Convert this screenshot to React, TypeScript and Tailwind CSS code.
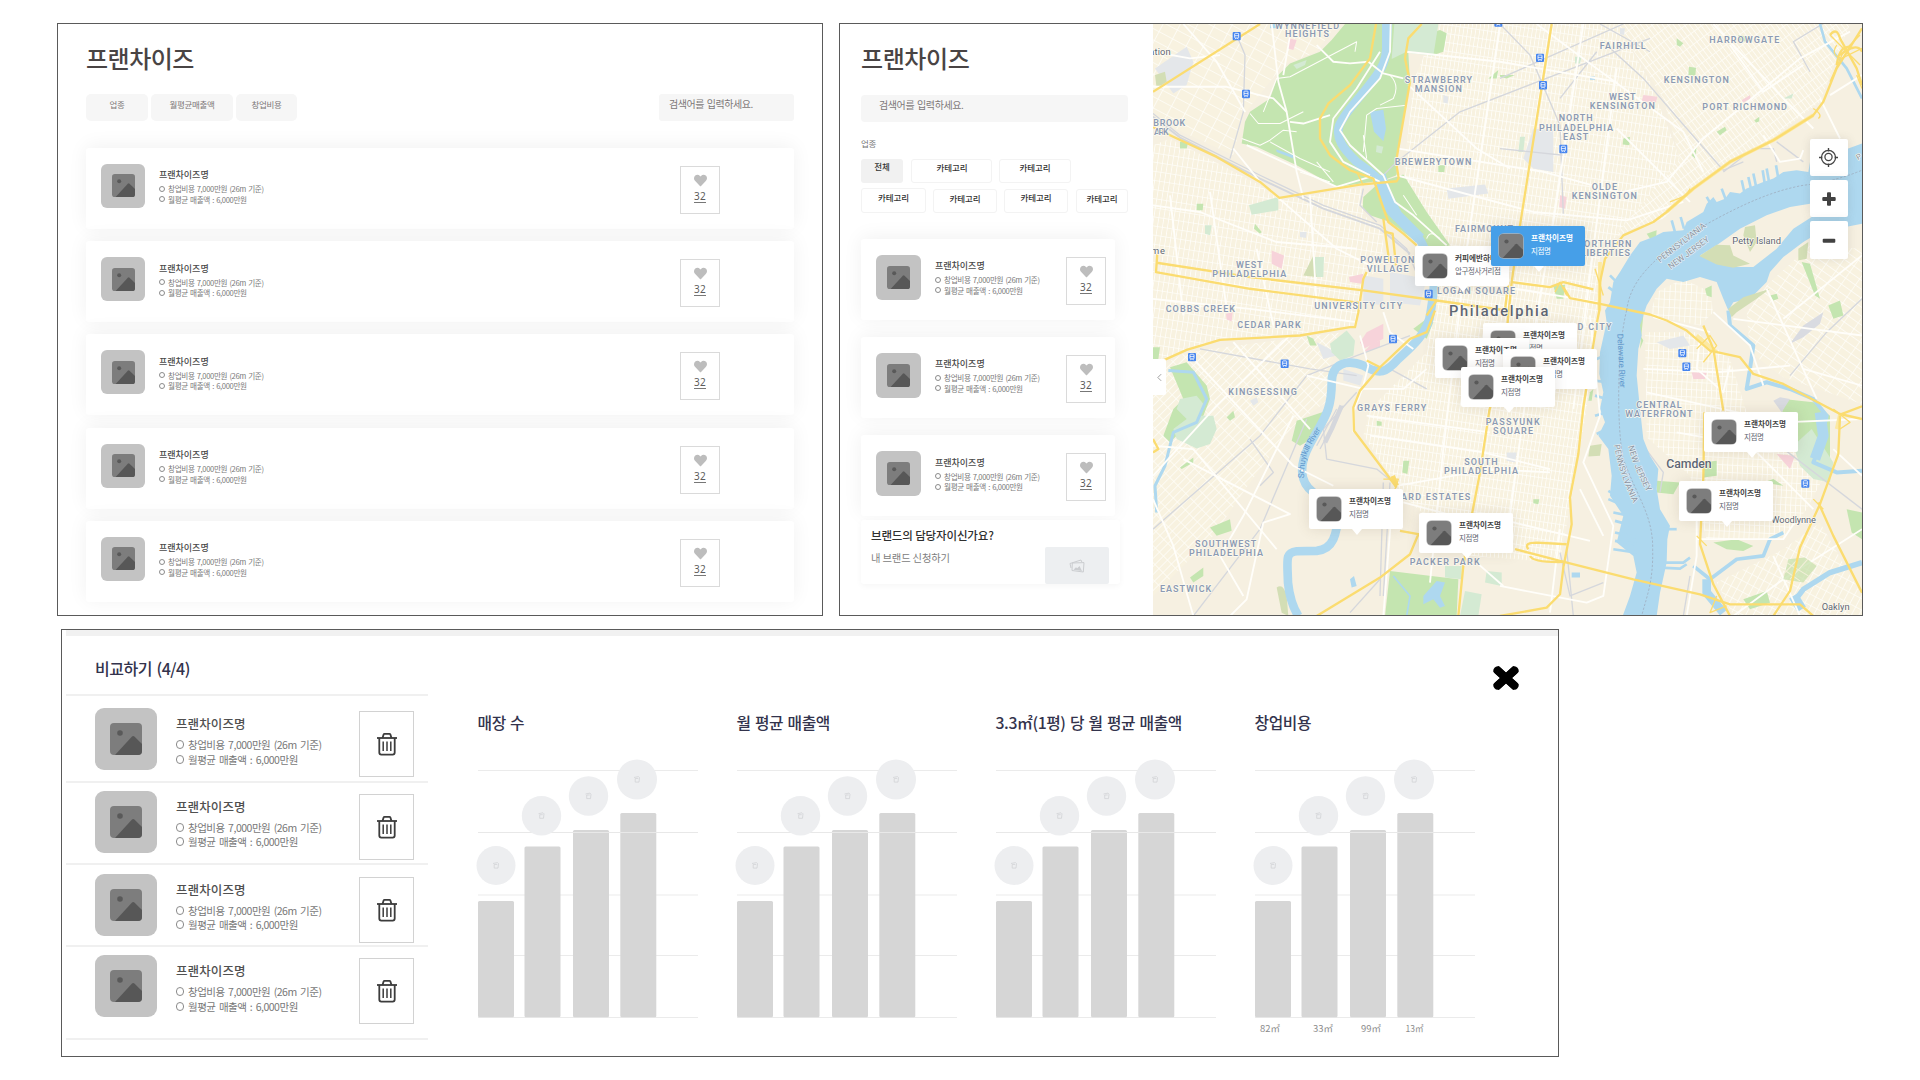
import React from "react";
import { FaHeart } from "react-icons/fa";

/* ---------- shared pieces ---------- */

function Thumb({ className, inner }: { className: string; inner: string }) {
  return (
    <div className={`flex shrink-0 items-center justify-center bg-[#c3c3c3] ${className}`}>
      <Photo className={inner} />
    </div>
  );
}

function Photo({ className }: { className: string }) {
  return (
    <svg viewBox="0 0 32 32" className={className}>
      <rect width="32" height="32" rx="4" fill="#7d7d7d" />
      <circle cx="10" cy="10" r="2.8" fill="#595959" />
      <path d="M5 32 L22 13.5 Q23.2 12.4 24.4 13.5 L32 21 V28 Q32 32 28 32 Z" fill="#575757" />
    </svg>
  );
}

function Ring({ className }: { className: string }) {
  return <span className={`inline-block shrink-0 rounded-full border-[#8b8b8b] ${className}`} />;
}

function LikeBox({ className }: { className: string }) {
  return (
    <div className={`flex shrink-0 flex-col items-center border border-[#dadada] bg-white ${className}`}>
      <FaHeart className="mt-[7px] h-[13px] w-[13px] text-[#bdbdbd]" />
      <span className="mt-[4px] border-b border-[#777] pb-px font-['Noto_Sans',sans-serif] text-[10px] leading-[10px] tracking-[0.4px] text-[#5c5c5c]">
        32
      </span>
    </div>
  );
}

function CardInfo() {
  return (
    <div className="ml-[14px] flex flex-col">
      <div className="mt-[6.5px] text-[9px] font-medium leading-[9px] text-[#4a4a4a]">프랜차이즈명</div>
      <div className="mt-[5px] flex items-center text-[7.6px] leading-[9px] tracking-[-0.36px] text-[#7a7a7a] [word-spacing:0.9px]">
        <Ring className="mr-[3px] h-[6px] w-[6px] border" />
        창업비용 7,000만원 (26m 기준)
      </div>
      <div className="mt-[1.5px] flex items-center text-[7.6px] leading-[9px] tracking-[-0.36px] text-[#7a7a7a] [word-spacing:0.9px]">
        <Ring className="mr-[3px] h-[6px] w-[6px] border" />
        월평균 매출액 : 6,000만원
      </div>
    </div>
  );
}

/* ---------- list panel ---------- */

function ListPanel() {
  return (
    <section className="h-[593px] w-[766px] overflow-hidden border border-[#5a5a5a] bg-white pl-[28px] pt-[21px]">
      <h1 className="text-[24px] font-medium leading-[26px] text-[#494444] tracking-[-0.5px]">프랜차이즈</h1>
      <div className="mt-[23px] flex h-[27px] w-[708px] text-[8.5px] leading-[20px] text-[#7d7878] tracking-[-0.3px]">
        <div className="w-[62px] rounded-[5px] bg-[#f6f6f6] text-center">업종</div>
        <div className="ml-[3px] w-[82px] rounded-[5px] bg-[#f6f6f6] text-center">월평균매출액</div>
        <div className="ml-[3px] w-[61px] rounded-[5px] bg-[#f6f6f6] text-center">창업비용</div>
        <div className="ml-auto w-[135px] rounded-[3px] bg-[#f6f6f6] pl-[10px] text-[10px] leading-[19px] tracking-[-0.45px] [word-spacing:1px]">
          검색어를 입력하세요.
        </div>
      </div>
      <div className="mt-[26.8px] flex w-[708px] flex-col gap-[12.3px]">
        {[0, 1, 2, 3, 4].map((i) => (
          <div key={i} className="flex h-[81px] rounded-[3px] bg-white pl-[15px] pt-[16px] shadow-[0_-2px_20px_rgba(0,0,0,0.06)]">
            <Thumb className="h-[44px] w-[44px] rounded-[6px]" inner="h-[23px] w-[23px]" />
            <CardInfo />
            <LikeBox className="ml-auto mr-[74px] mt-[2px] h-[48px] w-[40px]" />
          </div>
        ))}
      </div>
    </section>
  );
}

/* ---------- map ---------- */

const GRIDS = [
  { id: "ga", a: 28, w: 46, h: 30, pts: "9,27 560,27 500,110 400,150 280,300 250,420 9,310" },
  { id: "gb", a: 9, w: 15, h: 27, pts: "9,390 60,370 330,510 390,555 640,515 640,600 700,640 700,760 640,790 620,935 450,955 210,970 9,1040" },
  { id: "gc", a: 8.5, w: 12, h: 26, pts: "860,27 1400,27 1500,200 1590,430 1550,590 1350,690 1345,890 1310,1180 1290,1300 1230,1640 960,1620 760,1440 640,1260 660,1180 830,1010 860,800 890,680 760,490 790,200" },
  { id: "gd", a: -37, w: 13, h: 30, pts: "1400,27 2100,27 2010,260 1860,375 1740,440 1630,520 1540,610 1400,655 1590,430 1540,250" },
  { id: "ge", a: 45, w: 17, h: 36, pts: "9,1060 110,1010 450,965 580,950 540,1050 540,1150 430,1230 300,1400 190,1560 9,1740" },
  { id: "gf", a: 3, w: 15, h: 22, pts: "1485,950 1640,950 1740,1030 1790,1190 1940,1200 2050,1330 1970,1480 1900,1570 1670,1570 1620,1380 1490,1265" },
  { id: "gg", a: -55, w: 22, h: 36, pts: "1790,890 1850,810 1980,690 2136,700 2136,1165 1900,1085 1800,1010" },
  { id: "gh", a: 28, w: 20, h: 30, pts: "1900,1600 2010,1520 2136,1740 2136,1800 1750,1800 1700,1700" },
  { id: "gi", a: 3, w: 16, h: 24, pts: "1520,830 1600,790 1680,830 1690,890 1650,930 1500,900" },
];

const WHITE = [
  "M9 215 L230 215 370 250 410 290", "M100 27 L200 140 285 290", "M365 27 L385 200 410 290 440 470 460 550", "M400 180 L420 60",
  "M9 110 L120 130 210 120", "M250 400 L330 500 560 700 700 770", "M500 90 L550 140 600 145 655 140 700 175 760 190",
  "M290 390 L560 515 660 485 690 500", "M420 320 L460 325 540 300", "M722 27 L720 110 690 190 600 290 570 345 600 390 700 480 735 560 790 600 890 690",
  "M690 110 L620 220 550 310 540 380 580 440 660 480", "M770 110 L1050 140 1400 200", "M775 210 L980 400 1080 460", "M745 400 L1180 470 1400 530",
  "M740 480 L1150 590 1430 615 1600 560", "M9 570 L150 590 380 680 620 700", "M9 850 L300 880 620 920", "M320 700 L370 930", "M180 530 L230 880",
  "M60 540 L100 900", "M480 540 L500 870", "M860 780 L1340 860", "M1050 27 L950 700 880 1300 840 1700", "M1300 27 L1210 620 1160 900 1080 1500",
  "M1400 160 L1330 700 1270 1180", "M1160 27 L1340 160 1600 350 1660 470", "M1420 530 L1550 500 1660 370 1950 130 2100 50",
  "M1690 27 L1900 250 1990 340", "M1740 90 L1840 230 1960 150", "M2010 250 L2070 370", "M1840 360 L1890 440 1950 430 1960 405",
  "M2040 240 L2136 180", "M1400 340 L1620 560", "M1320 900 L1350 1200 1300 1340 1390 1530 1360 1740 1310 1760 1050 1710",
  "M1050 1510 L1320 1575", "M1230 1540 L1200 1790", "M1290 1420 L1360 1560", "M100 1330 L420 1495 340 1520 290 1750 240 1800",
  "M9 1290 L130 1300 380 1600", "M9 1450 L70 1590 130 1800", "M130 1030 L430 1350 550 1410", "M250 980 L480 1240", "M430 1200 L280 1500 210 1620 280 1740",
  "M9 1380 L200 1170 420 960", "M470 1080 L640 1120 760 1120 830 1060", "M630 960 L655 1050 640 1110 610 1190 610 1250", "M700 890 L720 950 790 1000",
  "M650 1200 L1020 1250", "M660 1260 L1000 1310 1200 1360", "M740 1410 L1020 1360 1200 1370", "M730 1420 L700 1800", "M760 1460 L950 1510 1050 1520",
  "M980 1640 L1060 1710", "M1480 1060 L1700 1070 1920 1050", "M1650 960 L1640 1060 1720 1130 1740 1050", "M1490 1130 L1900 1220 2136 1210",
  "M1580 1250 L1800 1290 1990 1480", "M1640 1480 L1640 1620 1610 1800", "M1640 1570 L1900 1570 1940 1510", "M1870 1620 L1950 1800",
  "M1750 1800 L1900 1690 2136 1540", "M1750 910 L2136 960", "M1690 890 L1800 990 1840 1110", "M1850 820 L2000 1150", "M2136 1110 L1960 1060",
  "M2050 1300 L2136 1380", "M1510 905 L1680 950", "M1900 910 L2136 720",
];

const GREY_RAIL = [
  "M9 295 L90 360 330 480 520 570 690 630 770 700 810 800", "M260 60 L285 120 280 290 240 430", "M640 520 L630 570 680 620", "M1340 110 L1230 250",
  "M1500 70 L930 290 740 440 690 490", "M1050 27 L1140 120 1230 330 1240 600", "M1050 190 L1420 27", "M1370 90 L1480 190 1610 340 1720 465 1780 440",
  "M1500 110 L1350 27", "M2060 1 L1930 80 1980 170",
  "M9 1540 L330 1260 470 1080 620 1020 780 960", "M130 1800 L330 1540 470 1210", "M300 1270 L370 1370 330 1410", "M620 1130 L520 1240 530 1330 680 1360 730 1400",
  "M560 1180 L500 1290", "M580 1170 L510 1300", "M150 1000 L480 1060 620 1080", "M700 1400 L690 1740", "M720 1400 L700 1740", "M1920 1080 L2030 950 2136 850",
  "M1230 1610 L1260 1740 1360 1700", "M1250 1600 L1270 1800", "M1480 1290 L1540 1370 1530 1430", "M1810 1230 L2136 1480", "M600 1790 L690 1690", "M1600 1800 L1620 1680",
  "M1720 470 L1810 400 1870 400 1880 440", "M720 1060 L830 1120", "M1050 400 L1240 420", "M1880 380 L1960 440",
];

const YELLOW = [
  "M9 230 L330 27",
  "M9 335 L60 360 200 425 330 500 388 548 630 508 740 498 746 488 738 440 780 200 765 130 775 70 815 27",
  "M678 27 L660 130 600 210 535 265 510 310 510 370 540 420 600 465 670 490 690 550 715 620 760 655 800 690",
  "M22 715 L18 770 300 820 630 862 M20 742 L300 785 640 825 860 855 1070 885",
  "M700 610 L718 740 M708 650 L728 655 738 750",
  "M650 770 L640 790 625 890 615 935 600 935 450 960 210 973 110 1003 50 1030 9 1048",
  "M1205 27 L1110 630 1085 800 1065 1000 1018 1185 990 1370 965 1500 940 1650 925 1800",
  "M2136 40 L2060 160 2020 260 1990 300 1870 375 1740 440 1630 520 1550 590 1510 620 1420 660 1365 730 1350 800 1348 885 1340 925 1300 1175 1285 1315 1260 1445 1265 1525 1240 1655 1230 1735 1190 1775 1050 1800",
  "M1085 800 L1200 815 1240 800 1330 822 M1240 815 L1260 848 1350 865 1500 897 1550 915 1610 945 1680 1005 1770 1025 1810 1075 1900 1105 2070 1195 2136 1210 M2136 1172 L2070 1197",
  "M2070 1200 L2065 1315 2010 1465 1950 1595 1920 1725 1870 1800 M2005 1460 L2050 1560 2136 1730",
  "M1660 930 L1690 1000 1720 1185 M1663 1190 L1660 1385 1650 1585 1690 1705 1740 1800",
  "M1095 1600 L1230 1635 1450 1690 1650 1735 1740 1765 1950 1765 1990 1800",
  "M855 885 L830 950 780 970 690 1055 630 1125 610 1175 612 1245 680 1335 740 1415 M650 1035 L690 1055",
  "M750 1545 L805 1555 780 1615 690 1685 500 1800",
  "M860 855 L830 900 M1135 1600 Q1120 1580 1160 1580 L1250 1585 M1140 1620 Q1150 1640 1240 1638",
  "M2040 60 Q2060 35 2070 70 L2120 160 2136 210 M2070 120 Q2120 80 2136 110 M2060 150 Q2070 80 2110 100",
  "M9 1270 L25 1300 9 1310", "M1075 800 L1065 885",
];

const GREENS = [
  "585,27 690,27 770,27 780,200 745,400 740,480 700,495 560,515 440,450 320,395 275,385 285,320 300,290 360,250 385,180 420,145 510,110 545,75",
  "640,545 690,500 760,478 830,590 900,690 860,700 800,680 720,620 660,600 638,575",
  "720,1665 925,1690 920,1800 705,1800", "440,1215 530,1185 500,1260 450,1290 425,1275",
  "60,1055 110,1040 170,1110 180,1150 160,1200 110,1230 60,1280 40,1260 70,1180 100,1150", "820,60 870,45 890,55 880,110 850,120",
  "1480,975 1430,885 1480,900 1470,1000", "1900,1150 1990,1160 2040,1200 2040,1330 1990,1380 1950,1300 1890,1280",
  "1690,1580 1760,1570 1810,1590 1780,1605 1730,1600", "1840,1400 1870,1390 1900,1410", "2090,1480 2136,1490 2136,1570 2105,1550",
  "1660,1340 1700,1335 1700,1380 1660,1385", "1520,1395 1590,1400 1570,1435 1520,1430", "790,940 830,910 850,920 830,970", "470,960 490,970 500,990 480,990",
  "90,380 115,380 110,400 90,400", "120,1685 160,1655 160,1680 130,1700", "180,1535 240,1510 245,1545 200,1560", "230,1205 250,1185 255,1205 240,1215",
  "90,1355 130,1325 130,1340 95,1360", "760,1335 778,1335 772,1375 757,1370", "9,995 30,995 25,1030 9,1030", "865,450 885,450 883,470 865,470",
  "1420,370 1440,365 1438,390 1418,388", "1580,70 1600,85 1590,95 1580,90", "1617,155 1638,158 1636,182 1615,180", "1625,420 1640,395 1635,430",
  "1700,350 1725,335 1730,345 1710,360", "1813,315 1828,305 1828,318 1818,323", "1765,60 1790,65 1790,80 1765,75", "1050,180 1095,180 1070,190 1050,185",
  "1015,190 1045,165 1040,190", "1490,655 1520,645 1518,670 1500,670", "1665,820 1685,810 1685,845 1670,840", "1955,740 1980,745 2010,850 1995,840",
  "2035,870 2070,855 2080,900 2050,910", "1210,810 1245,808 1240,850 1220,850", "140,565 160,565 158,585 140,585", "315,625 335,650 330,655 312,640",
  "1860,840 1880,835 1885,850 1870,855", "1320,1130 1330,1120 1325,1155 1315,1155", "680,1215 695,1218 695,1230 680,1230", "1150,1450 1168,1450 1165,1465 1150,1462",
  "1780,1750 1850,1725 1860,1760 1800,1780",
];

const MINTS = [
  "733,27 865,27 850,122 765,112 725,132", "297,570 385,545 385,585 305,598", "90,1150 140,1140 165,1170 150,1200 190,1200 200,1240 180,1285 140,1298 80,1270 70,1240 110,1210 80,1180",
  "540,985 590,945 615,975 610,1020 570,1035 545,1010", "945,1725 995,1735 985,1800 930,1800", "1010,1665 1055,1670 1055,1710 1005,1700", "885,1650 935,1650 935,1690 885,1685",
  "495,725 522,725 520,785 495,785", "1930,1290 1985,1240 2050,1340 2040,1400 1990,1390 1950,1350", "430,150 470,135 465,150 440,162", "165,630 185,630 180,660 165,655",
  "1110,365 1125,365 1120,410 1105,410", "1275,125 1295,125 1290,145 1275,145", "1900,250 1930,235 1925,250", "680,390 700,395 695,415 678,410",
];

const GREYS = [
  "15,160 110,95 130,140 110,210 70,235", "890,520 1005,508 1015,535 895,550", "1150,340 1210,345 1210,470 1150,460 1120,430", "640,780 700,790 700,870 640,860",
  "500,980 540,1000 560,1020 520,1030", "580,1060 640,1080 630,1110 580,1095", "720,770 830,790 810,870 720,860", "1520,980 1600,960 1620,990 1560,1000",
  "1410,40 1425,40 1422,60 1410,58", "880,240 895,245 893,265 880,262", "300,1155 320,1145 325,1160 310,1170", "450,650 470,650 468,668 450,665", "1070,1310 1100,1310 1095,1340 1070,1335",
];

const PINKS = [
  "415,70 440,75 430,105 412,100", "365,705 402,720 395,760 365,745", "597,785 640,775 635,805 600,800", "650,950 700,925 700,970 640,1000 630,980", "665,985 690,975 690,995 640,1010",
  "1480,240 1522,245 1518,262 1475,258", "1230,540 1250,545 1245,580 1228,575", "1625,1070 1670,1070 1665,1090 1630,1090", "1880,1315 1935,1320 1920,1360", "1775,255 1800,240 1802,250 1780,262",
  "228,895 248,890 245,918 230,912",
];

type Label = { t: string; x: number; y: number; w: number };
const LABELS: Label[] = [
  { t: "WYNNEFIELD", x: 471, y: 41, w: 192 }, { t: "HEIGHTS", x: 471, y: 67, w: 132 },
  { t: "STRAWBERRY", x: 865, y: 205, w: 202 }, { t: "MANSION", x: 865, y: 232, w: 142 },
  { t: "BREWERYTOWN", x: 849, y: 448, w: 230 }, { t: "BROOK", x: 58, y: 332, w: 96 }, { t: "ARK", x: 34, y: 359, w: 44 },
  { t: "WEST", x: 298, y: 759, w: 80 }, { t: "PHILADELPHIA", x: 298, y: 786, w: 222 },
  { t: "POWELTON", x: 712, y: 743, w: 162 }, { t: "VILLAGE", x: 713, y: 770, w: 126 }, { t: "FAIRMOUNT", x: 1002, y: 650, w: 174 },
  { t: "LOGAN SQUARE", x: 978, y: 836, w: 234 }, { t: "UNIVERSITY CITY", x: 625, y: 882, w: 264 }, { t: "COBBS CREEK", x: 151, y: 889, w: 208 },
  { t: "FAIRHILL", x: 1418, y: 101, w: 138 }, { t: "HARROWGATE", x: 1783, y: 84, w: 210 }, { t: "KENSINGTON", x: 1639, y: 203, w: 196 },
  { t: "WEST", x: 1417, y: 255, w: 80 }, { t: "KENSINGTON", x: 1417, y: 282, w: 196 }, { t: "PORT RICHMOND", x: 1784, y: 286, w: 254 },
  { t: "NORTH", x: 1277, y: 319, w: 102 }, { t: "PHILADELPHIA", x: 1278, y: 346, w: 222 }, { t: "EAST", x: 1277, y: 373, w: 76 },
  { t: "OLDE", x: 1363, y: 525, w: 76 }, { t: "KENSINGTON", x: 1363, y: 552, w: 196 }, { t: "NORTHERN", x: 1362, y: 696, w: 164 }, { t: "LIBERTIES", x: 1366, y: 723, w: 148 },
  { t: "CEDAR PARK", x: 357, y: 939, w: 190 }, { t: "KINGSESSING", x: 338, y: 1138, w: 206 }, { t: "GRAYS FERRY", x: 725, y: 1185, w: 208 },
  { t: "PASSYUNK", x: 1088, y: 1228, w: 162 }, { t: "SQUARE", x: 1089, y: 1255, w: 120 }, { t: "SOUTH", x: 993, y: 1347, w: 100 }, { t: "PHILADELPHIA", x: 993, y: 1374, w: 222 },
  { t: "GIRARD ESTATES", x: 830, y: 1452, w: 262 }, { t: "SOUTHWEST", x: 227, y: 1594, w: 184 }, { t: "PHILADELPHIA", x: 228, y: 1621, w: 222 },
  { t: "PACKER PARK", x: 884, y: 1646, w: 210 }, { t: "EASTWICK", x: 107, y: 1728, w: 154 }, { t: "OLD CITY", x: 1313, y: 944, w: 144 },
  { t: "CENTRAL", x: 1527, y: 1176, w: 136 }, { t: "WATERFRONT", x: 1527, y: 1203, w: 202 },
];

const STATIONS = [
  [260, 63], [288, 236], [1045, 22], [1170, 128], [1179, 210], [1240, 401], [836, 835],
  [126, 1024], [404, 1044], [729, 970], [1597, 1012], [1609, 1053], [1966, 1403],
];

const SCHUYLKILL =
  "M714 20 C708 90 714 130 690 165 C650 230 590 280 568 330 C555 370 580 400 620 440 C660 470 695 490 705 530 C712 600 740 600 770 630 C810 660 825 700 840 740 C860 800 850 830 842 890 C835 950 790 990 745 1030 C710 1070 690 1080 640 1050 C590 1030 545 1045 545 1100 C545 1190 520 1210 480 1285 C445 1350 450 1400 490 1430 C530 1450 575 1430 568 1480 C560 1560 550 1600 500 1605 L440 1606 C405 1610 412 1630 414 1700 Q420 1760 445 1800";

const DELAWARE =
  "2136,385 2095,400 2045,425 1980,440 1975,470 1940,465 1900,470 1870,490 1840,500 1790,520 1770,535 1740,530 1725,550 1700,560 1690,545 1670,565 1660,590 1610,620 1600,645 1540,650 1510,665 1470,680 1440,720 1410,770 1390,800 1380,860 1365,885 1370,920 1350,1010 1348,1075 1360,1130 1350,1180 1365,1220 1345,1260 1375,1300 1385,1380 1380,1440 1420,1500 1400,1580 1450,1620 1460,1670 1440,1740 1418,1800 1520,1800 1530,1730 1550,1640 1552,1570 1560,1530 1530,1480 1520,1420 1525,1360 1500,1320 1480,1270 1470,1180 1460,1080 1465,1000 1475,960 1470,930 1490,870 1520,820 1550,790 1600,800 1650,785 1700,800 1720,850 1735,885 1750,860 1800,850 1850,800 1860,770 1900,725 1960,680 2010,650 2136,625";

const JETTIES = [
  "M1785 540 L1775 495", "M1805 530 L1795 485", "M1820 522 L1810 475", "M1845 510 L1838 465", "M1858 505 L1850 460", "M1885 490 L1878 450", "M1730 560 L1715 520",
  "M1690 580 L1670 545", "M1602 640 L1592 605", "M1575 650 L1565 615", "M1450 730 L1425 705", "M1400 800 L1380 780", "M1395 830 L1375 815", "M1400 1440 L1375 1425", "M1410 1465 L1375 1450",
  "M1440 1500 L1390 1490", "M1450 1530 L1395 1515", "M1460 1565 L1395 1550", "M1460 1585 L1395 1575", "M1460 1610 L1390 1600", "M1365 1020 L1340 1030", "M1370 1100 L1335 1095", "M1370 1150 L1335 1140", "M1370 1190 L1335 1200",
  "M1360 1245 L1340 1255", "M1540 1540 L1580 1540", "M1520 1640 L1600 1640 1620 1625", "M1530 1655 L1590 1658 1610 1645",
];

function MapCanvas() {
  return (
    <svg viewBox="9 27 2127 1770" preserveAspectRatio="none" className="absolute inset-0 h-full w-full">
      <defs>
        {GRIDS.map((g) => (
          <pattern key={g.id} id={g.id} width={g.w} height={g.h} patternUnits="userSpaceOnUse" patternTransform={`rotate(${g.a})`}>
            <rect width={g.w} height={g.h} fill="#f8f2e0" />
            <path d={`M0 0 H${g.w} M0 0 V${g.h}`} stroke="#fffefa" strokeWidth="4.500" />
          </pattern>
        ))}
        <path id="pa1" d="M1530 742 L1672 632" />
        <path id="nj1" d="M1562 762 L1682 674" />
        <path id="sr" d="M462 1388 Q462 1330 478 1300 T516 1236" />
        <path id="pa2" d="M1392 1288 Q1405 1370 1450 1462" />
        <path id="nj2" d="M1435 1292 Q1448 1350 1492 1432" />
        <path id="dr" d="M1402 955 L1410 1120" />
      </defs>
      <rect x="0" y="0" width="2150" height="1810" fill="#f6f0e1" />
      {GRIDS.map((g) => (
        <polygon key={g.id} points={g.pts} fill={`url(#${g.id})`} />
      ))}
      {GREYS.map((p) => <polygon key={p} points={p} fill="#e4e7ea" />)}
      {GREENS.map((p) => <polygon key={p} points={p} fill="#c4e5b0" />)}
      {MINTS.map((p) => <polygon key={p} points={p} fill="#d4ead3" />)}
      {PINKS.map((p) => <polygon key={p} points={p} fill="#f7d3da" />)}
      <path d="M380 1715 Q400 1700 410 1740 L415 1800 395 1790 Z M460 780 L490 720 500 785 Z M15 180 L45 170 50 200 20 220 Z M1320 1290 L1355 1285 1350 1320 1315 1322 Z" fill="#d3deb5" />
      <path d="M1920 985 L1960 930 2020 890 2010 925 1960 965 Z M1870 1155 L1890 1145 1920 1150 1895 1190 Z" fill="#d9dbe1" />
      <g fill="none" stroke="#d5d7dc" strokeWidth="4" strokeLinejoin="round">
        {GREY_RAIL.map((d) => <path key={d} d={d} />)}
        <path d="M9 305 L90 367 330 490 520 580 690 640 780 715" strokeWidth="6" />
        <path d="M575 1170 L545 1240 525 1280" strokeWidth="14" />
      </g>
      <g fill="none" stroke="#aed8ef" strokeLinejoin="round">
        <path d={SCHUYLKILL} strokeWidth="26" />
        <path d="M705 27 V120" strokeWidth="18" />
        <path d="M690 480 L705 530 L740 600 L810 670" strokeWidth="34" />
        <path d="M2010 27 L2025 80 2090 160 2136 250" strokeWidth="8" />
        <path d="M55 1065 L130 1070 170 1150 140 1220 70 1250 45 1350 15 1410 20 1490" strokeWidth="9" />
        <path d="M1735 885 L1740 930 1810 990 1800 1060 1790 1120 1850 1100 1920 1120 1990 1150 2030 1200 2010 1290 1990 1340 2060 1370 2136 1365" strokeWidth="12" />
        <path d="M2010 1190 L2020 1260 1995 1330" strokeWidth="32" />
        <path d="M1630 1650 L1680 1690 1760 1630 1840 1620 1860 1570 1900 1550" strokeWidth="11" />
        <path d="M1670 1690 L1670 1730 1720 1790" strokeWidth="26" />
        <path d="M1930 1760 L1960 1720 2040 1670 2136 1640" strokeWidth="16" />
        <path d="M1955 1780 L1930 1740" strokeWidth="30" />
        <path d="M730 1680 L780 1740 770 1800" strokeWidth="5" />
      </g>
      <path d="M660 290 L700 284 708 340 700 378 672 350 Z M820 1740 L860 1695 885 1700 870 1740 885 1770 870 1775 850 1750 820 1765 Z M600 1690 L612 1680 620 1710 605 1715 Z M378 402 L430 420 430 430 380 410 Z M362 27 L375 27 380 40 360 40 Z M1265 1670 H1290 V1685 H1265 Z M1320 184 H1335 V194 H1320 Z" fill="#aed8ef" />
      <polygon points={DELAWARE} fill="#aed8ef" />
      <polygon points="1650,720 1700,690 1770,640 1850,600 1920,575 1980,565 1985,605 1930,640 1880,700 1810,755 1750,755 1700,745" fill="#f6f0e1" />
      <path d="M1648 722 L1700 688 1740 690 1750 720 1800 745 1750 757 1700 747 Z M1785 635 L1815 630 1820 680 1800 710 1780 660 Z M1735 880 L1780 845 1860 820 1820 850 1760 890 1745 905 Z M1945 700 L1975 680 1970 730 1945 735 Z" fill="#d3deb5" />
      <g fill="none" stroke="#aed8ef" strokeWidth="8">
        {JETTIES.map((d) => <path key={d} d={d} />)}
      </g>
      <g fill="none" stroke="#fffefa" strokeWidth="5.5" strokeLinejoin="round">
        {WHITE.map((d) => <path key={d} d={d} />)}
        <g strokeWidth="3">
          <path d="M300 295 L325 325 390 325 460 290 M340 290 L380 190 420 185 620 80 615 110 M275 370 L330 390 360 375 400 345 440 350 M360 380 L450 430 540 470 M640 410 L650 300 680 280 770 270 M650 430 L640 360 M720 180 Q750 210 730 250 L690 270 M450 470 L540 500 M500 440 L550 500" />
          <path d="M830 670 Q840 640 870 670 M760 540 L800 600" />
        </g>
      </g>
      <path d="M1915 1630 L1965 1625 2000 1650 1960 1700 1900 1690 Z" fill="#c4dfaa" opacity=".7" />
      <g fill="none" stroke="#f3f0da" strokeWidth="3">
        <path d="M1920 1690 L1975 1628 M1905 1670 L1945 1628 M1910 1640 L1975 1680 M1900 1660 L1950 1695" />
      </g>
      <g fill="none" stroke="#fce9a3" strokeWidth="11" strokeLinejoin="round">
        <path d="M1990 300 L1870 375 1740 440 1630 520 1550 590" />
        <path d="M1350 740 L1348 885 M1640 960 L1700 1010 M2070 1195 L2060 1240" />
      </g>
      <g fill="none" stroke="#fbdc70" strokeWidth="7" strokeLinejoin="round">
        {YELLOW.map((d) => <path key={d} d={d} />)}
        <g strokeWidth="4">
          <path d="M2040 60 L2130 150 M2060 90 Q2040 120 2075 130 L2136 100 M2040 200 L2080 110 2130 60 M2120 180 L2136 220 M1990 280 Q2020 300 2005 310 M1560 560 L1610 540 1620 520 M1640 1000 L1680 960 1700 990 1660 1040 M2050 1180 L2100 1220 2070 1240 M700 1390 L745 1390 735 1420 M1215 830 L1230 800 1250 840 M1640 1560 L1670 1590 M1700 1740 L1680 1790 1730 1770 M1335 760 L1360 840 M620 470 L640 510 M1990 1450 L2020 1480" />
        </g>
        <path d="M728 1380 L740 1410" strokeWidth="14" />
      </g>
      <g fill="none" stroke="#9fb0c2" strokeWidth="2.5" strokeDasharray="7 5">
        <path d="M1430 885 C1440 800 1500 740 1610 660 C1750 580 1850 530 1960 510 Q2050 500 2136 465" />
        <path d="M1430 885 C1400 1000 1400 1240 1420 1330 C1460 1440 1510 1500 1508 1600 C1510 1700 1490 1740 1475 1800" />
      </g>
      {STATIONS.map(([x, y]) => (
        <g key={`${x}-${y}`} transform={`translate(${x} ${y})`}>
          <rect x="-12" y="-12" width="24" height="25" rx="3" fill="#4584ee" />
          <rect x="-6" y="-8" width="12" height="14" rx="2" fill="none" stroke="#fff" strokeWidth="2.5" />
          <path d="M-6 -1 H6 M-5 10 L-2 6 M5 10 L2 6" stroke="#fff" strokeWidth="2.2" />
        </g>
      ))}
      <g fontFamily="Roboto, sans-serif" paintOrder="stroke" stroke="#fdfaf0" strokeWidth="4" strokeLinejoin="round">
        <g fontSize="27" fontWeight="600" fill="#8c9ab3" textAnchor="middle">
          {LABELS.map((l) => (
            <text key={l.t + l.x + l.y} x={l.x} y={l.y} textLength={l.w} lengthAdjust="spacing">{l.t}</text>
          ))}
        </g>
        <g fill="#5e6674" fontSize="28" textAnchor="middle">
          <text x="30" y="120" textLength="64">ation</text>
          <text x="24" y="715" textLength="42">me</text>
          <text x="1820" y="685" textLength="146">Petty Island</text>
          <text x="1931" y="1520" textLength="134">Woodlynne</text>
          <text x="2057" y="1781" textLength="84">Oaklyn</text>
          <text x="1617" y="1358" fontSize="37" fontWeight="500" textLength="136">Camden</text>
          <text x="1046" y="903" fontSize="44" fontWeight="500" textLength="298">Philadelphia</text>
        </g>
        <g fontSize="25" fill="#8b95a3" stroke="#e3edf2">
          <text><textPath href="#pa1" textLength="176">PENNSYLVANIA</textPath></text>
          <text><textPath href="#nj1" textLength="146">NEW JERSEY</textPath></text>
          <text><textPath href="#pa2" textLength="184">PENNSYLVANIA</textPath></text>
          <text><textPath href="#nj2" textLength="148">NEW JERSEY</textPath></text>
        </g>
        <g fontSize="25" fill="#5f97cc" stroke="none">
          <text><textPath href="#sr" textLength="158">Schuylkill River</textPath></text>
          <text><textPath href="#dr" textLength="162">Delaware River</textPath></text>
        </g>
        <text x="2124" y="435" fontSize="23" fill="#8b95a3" transform="rotate(-30 2124 435)">P</text>
      </g>
    </svg>
  );
}

type PinData = { pos: string; name: string; place: string; active?: boolean };
const PINS: PinData[] = [
  { pos: "left-[262px] top-[222px]", name: "커피에반하다", place: "압구정사거리점" },
  { pos: "left-[338px] top-[202px]", name: "프랜차이즈명", place: "지점명", active: true },
  { pos: "left-[330px] top-[299px]", name: "프랜차이즈명", place: "지점명" },
  { pos: "left-[282px] top-[314px]", name: "프랜차이즈명", place: "지점명" },
  { pos: "left-[350px] top-[325px]", name: "프랜차이즈명", place: "지점명" },
  { pos: "left-[308px] top-[343px]", name: "프랜차이즈명", place: "지점명" },
  { pos: "left-[156px] top-[465px]", name: "프랜차이즈명", place: "지점명" },
  { pos: "left-[266px] top-[489px]", name: "프랜차이즈명", place: "지점명" },
  { pos: "left-[551px] top-[388px]", name: "프랜차이즈명", place: "지점명" },
  { pos: "left-[526px] top-[457px]", name: "프랜차이즈명", place: "지점명" },
];

function Pin({ pos, name, place, active }: PinData) {
  return (
    <div className={`absolute ${pos}`}>
      <div
        className={`flex h-[40px] w-[94px] rounded-[2px] pl-[8px] pt-[8px] shadow-[0_0_14px_rgba(90,80,60,0.14)] ${
          active ? "bg-[#469fe8]" : "bg-white"
        }`}
      >
        <div className="h-[24px] w-[24px] rounded-[5px] ring-1 ring-[#b5b5b5]/70">
          <Photo className="h-[24px] w-[24px] rounded-[4px]" />
        </div>
        <div className={`ml-[8px] whitespace-nowrap ${active ? "text-white" : "text-[#444]"}`}>
          <div className="text-[7.6px] font-bold leading-[8px]">{name}</div>
          <div className={`mt-[5px] text-[7.5px] leading-[8px] tracking-[-0.4px] ${active ? "text-white" : "text-[#5f6570]"}`}>{place}</div>
        </div>
      </div>
      <div className="ml-[43px] h-0 w-0 border-x-[5px] border-t-[6px] border-x-transparent border-t-white" />
    </div>
  );
}

function MapPane() {
  return (
    <div className="relative h-full w-[709px] shrink-0 overflow-hidden bg-[#f6f0e1]">
      <MapCanvas />
      {PINS.map((p) => (
        <Pin key={p.pos} {...p} />
      ))}
      <div className="absolute left-0 top-[335px] flex h-[36px] w-[13px] items-center justify-center rounded-r-[2px] bg-white">
        <svg viewBox="0 0 6 10" className="h-[9px] w-[5px]">
          <path d="M5 1 L1 5 L5 9" fill="none" stroke="#a0a0a0" strokeWidth="1.2" />
        </svg>
      </div>
      <div className="absolute left-[656.5px] top-[115px] flex w-[38px] flex-col gap-[4px]">
        <div className="flex h-[37px] items-center justify-center rounded-[2px] bg-white shadow-[0_0_10px_rgba(80,80,80,0.15)]">
          <svg viewBox="0 0 18 18" className="h-[19px] w-[19px]" fill="none" stroke="#444">
            <circle cx="9" cy="9" r="6.7" strokeWidth="1.2" />
            <circle cx="9" cy="8.6" r="3.4" strokeWidth="1.2" />
            <path d="M9 0 V3.2 M9 14.8 V18 M0 9 H3.2 M14.8 9 H18" strokeWidth="1.3" />
          </svg>
        </div>
        <div className="flex h-[37px] items-center justify-center rounded-[2px] bg-white shadow-[0_0_10px_rgba(80,80,80,0.15)]">
          <svg viewBox="0 0 14 14" className="h-[14px] w-[14px]" fill="#424242">
            <rect x="0.3" y="5" width="13.4" height="4" rx="1" />
            <rect x="5" y="0.3" width="4" height="13.4" rx="1" />
          </svg>
        </div>
        <div className="flex h-[38px] items-center justify-center rounded-[2px] bg-white shadow-[0_0_10px_rgba(80,80,80,0.15)]">
          <svg viewBox="0 0 14 14" className="h-[14px] w-[14px]" fill="#424242">
            <rect x="0.7" y="5.8" width="12.6" height="4" rx="1" />
          </svg>
        </div>
      </div>
    </div>
  );
}

/* ---------- map search panel ---------- */

const chip = "box-border rounded-[3px] border border-[#f3f3f3] text-center";

function MapPanel() {
  return (
    <section className="flex h-[593px] w-[1024px] overflow-hidden border border-[#5a5a5a] bg-white">
      <div className="w-[313px] shrink-0 pl-[21px] pt-[21px]">
        <h1 className="text-[24px] font-medium leading-[26px] text-[#494444] tracking-[-0.4px]">프랜차이즈</h1>
        <div className="mt-[23.5px] h-[27px] w-[267px] rounded-[4px] bg-[#f6f6f6] pl-[18px] text-[10px] leading-[19px] tracking-[-0.4px] text-[#7d7878] [word-spacing:1px]">
          검색어를 입력하세요.
        </div>
        <div className="mt-[16px] text-[8.5px] leading-[10px] tracking-[-0.3px] text-[#777]">업종</div>
        <div className="mt-[11px] flex h-[24px] text-[8.5px] font-medium leading-[14px] text-[#333] tracking-[-0.1px]">
          <div className="w-[42px] rounded-[3px] bg-[#f1f1f1] text-center leading-[15px]">전체</div>
          <div className={`ml-[7.5px] w-[81px] pl-[2px] ${chip}`}>카테고리</div>
          <div className={`ml-[7.5px] w-[72px] ${chip}`}>카테고리</div>
        </div>
        <div className="mt-[5px] flex h-[25px] items-end text-[8.5px] font-medium text-[#333] tracking-[-0.1px]">
          <div className={`h-[25px] w-[65px] leading-[17px] ${chip}`}>카테고리</div>
          <div className={`ml-[7px] h-[24px] w-[64px] leading-[17px] ${chip}`}>카테고리</div>
          <div className={`ml-[7px] h-[24px] w-[64px] leading-[14px] ${chip}`}>카테고리</div>
          <div className={`ml-[8px] h-[24px] w-[52px] leading-[17px] ${chip}`}>카테고리</div>
        </div>
        <div className="mt-[26px] flex w-[254px] flex-col gap-[17.4px]">
          {[0, 1, 2].map((i) => (
            <div key={i} className="flex h-[81px] rounded-[3px] bg-white pl-[15px] pt-[16px] shadow-[0_-2px_20px_rgba(0,0,0,0.06)]">
              <Thumb className="h-[45px] w-[45px] rounded-[6px]" inner="h-[23px] w-[23px]" />
              <CardInfo />
              <LikeBox className="ml-auto mr-[9px] mt-[2px] h-[48px] w-[40px]" />
            </div>
          ))}
        </div>
        <div className="relative mt-[4px] flex h-[64px] w-[259px] justify-between rounded-[3px] bg-white pl-[10px] pr-[11px] shadow-[0_2px_6px_rgba(0,0,0,0.04)]">
          <div>
            <div className="mt-[9px] text-[11.5px] font-medium leading-[12px] tracking-[-0.15px] text-[#2f2f2f]">브랜드의 담당자이신가요?</div>
            <div className="mt-[11px] text-[10.3px] leading-[12px] tracking-[-0.15px] text-[#808080]">내 브랜드 신청하기</div>
          </div>
          <div className="flex h-[37px] w-[64px] items-center justify-center self-end rounded-[2px] bg-[#edeff1]">
            <svg viewBox="0 0 16 14" className="h-[14px] w-[16px]" fill="none" stroke="#cbcdd0" strokeWidth="1">
              <path d="M2 9 L1 4.5 L12 1 L12.8 3" />
              <path d="M3.3 4 L15 3.6 L14.3 13 L3 11.5 Z" />
              <path d="M4.5 10.8 L7 8.2 L8.2 9.3 L10.5 7 L13 12 Z" fill="#cbcdd0" stroke="none" />
            </svg>
          </div>
        </div>
      </div>
      <MapPane />
    </section>
  );
}

/* ---------- compare panel ---------- */

const ROWS = [
  "h-[86.5px] pt-[12px]",
  "h-[82.5px] pt-[8px]",
  "h-[82.2px] pt-[8.5px]",
  "h-[95px] pt-[8px]",
];

function TrashIcon() {
  return (
    <svg viewBox="0 0 22 24" className="h-[24px] w-[22px]" fill="none" stroke="#3c3c3c" strokeWidth="1.8">
      <path d="M1 6 H21" />
      <path d="M6.5 6 L7.6 2.6 Q7.8 1.8 8.6 1.8 H13.4 Q14.2 1.8 14.4 2.6 L15.5 6" />
      <path d="M3.3 6 V20.6 Q3.3 22.6 5.3 22.6 H16.7 Q18.7 22.6 18.7 20.6 V6" />
      <path d="M7.2 9.5 V19 M11 9.5 V19 M14.8 9.5 V19" strokeWidth="1.5" />
    </svg>
  );
}

function CompareList() {
  return (
    <div className="w-[362px] shrink-0">
      <h2 className="h-[58px] pl-[29px] pt-[23.5px] text-[16px] font-medium leading-[17px] tracking-[-0.5px] text-[#33334c] [word-spacing:1.5px]">비교하기 (4/4)</h2>
      {ROWS.map((r, i) => (
        <div key={i} className={`flex border-t-2 border-[#f0f0f0] pl-[29px] ${i === 3 ? "border-b-2" : ""} ${r}`}>
          <Thumb className="h-[62px] w-[62px] rounded-[9px]" inner="h-[32px] w-[32px]" />
          <div className="ml-[19px]">
            <div className="mt-[9px] text-[12.5px] font-medium leading-[13px] tracking-[0.1px] text-[#505050]">프랜차이즈명</div>
            <div className="mt-[8px] flex items-center text-[10.5px] leading-[13px] tracking-[-0.48px] text-[#787878] [word-spacing:1.5px]">
              <Ring className="mr-[4px] h-[9px] w-[8px] border-[1.5px]" />
              창업비용 7,000만원 (26m 기준)
            </div>
            <div className="mt-[1.5px] flex items-center text-[10.5px] leading-[13px] tracking-[-0.48px] text-[#787878] [word-spacing:1.5px]">
              <Ring className="mr-[4px] h-[9px] w-[8px] border-[1.5px]" />
              월평균 매출액 : 6,000만원
            </div>
          </div>
          <div className="ml-auto mr-[14px] mt-[3px] flex h-[66px] w-[55px] items-center justify-center border border-[#d2d2d2]">
            <TrashIcon />
          </div>
        </div>
      ))}
    </div>
  );
}

const BARS = [
  { x: 0, top: 131, cx: 18, cy: 95.5, r: 19.5 },
  { x: 46.5, top: 76.5, cx: 63.5, cy: 45.7, r: 19.7 },
  { x: 95, top: 60, cx: 110.5, cy: 26, r: 19.7 },
  { x: 142.3, top: 43, cx: 159, cy: 9.5, r: 20 },
];

function Chart({ title, labels }: { title: string; labels?: string[] }) {
  return (
    <div className="w-[259px] shrink-0">
      <h3 className="whitespace-nowrap text-[15.8px] font-medium leading-[17px] tracking-[-0.4px] text-[#33334c] [word-spacing:1.2px]">{title}</h3>
      <svg viewBox="-4 -14 236 290" className="-ml-[4px] mt-[25px] h-[290px] w-[236px]">
        <g stroke="#ebebeb" strokeWidth="1.2">
          <path d="M0 0.5 H220 M0 125 H220 M0 185.5 H220 M0 247.5 H220" />
        </g>
        {BARS.map((b) => (
          <rect key={b.x} x={b.x} y={b.top} width="36" height={247.3 - b.top} rx="1.5" fill="#d6d6d6" />
        ))}
        <path d="M0 62.5 H220" stroke="#e8e8e8" strokeWidth="1.2" />
        {BARS.map((b) => (
          <g key={b.cx}>
            <circle cx={b.cx} cy={b.cy} r={b.r} fill="#edeef0" />
            <path
              d={`M${b.cx - 3} ${b.cy - 2} l4.5 -.9 l1 1 l-.5 4.5 h-3.8 v-3.6 h3`}
              fill="none"
              stroke="#cfd0d2"
              strokeWidth="0.7"
            />
          </g>
        ))}
        {labels && (
          <g fontFamily="'Noto Sans CJK KR', sans-serif" fontSize="9" fill="#8c8c8c" textAnchor="middle">
            {labels.map((l, i) => (
              <text key={l} x={[15, 68, 116, 159.5][i]} y="262" textLength={i === 3 ? 18 : 20} lengthAdjust="spacingAndGlyphs">
                {l}
              </text>
            ))}
          </g>
        )}
      </svg>
    </div>
  );
}

function ComparePanel() {
  return (
    <section className="h-[428px] w-[1498px] border border-[#5a5a5a] bg-white pl-[4px]">
      <div className="h-[6px] bg-[#f1f1f1]" />
      <div className="flex">
        <CompareList />
        <div className="ml-[49.5px] flex flex-1 pt-[78px]">
          <Chart title="매장 수" />
          <Chart title="월 평균 매출액" />
          <Chart title="3.3㎡(1평) 당 월 평균 매출액" />
          <Chart title="창업비용" labels={["82㎡", "33㎡", "99㎡", "13㎡"]} />
          <svg viewBox="0 0 26 24" className="-mt-[48.5px] -ml-[21px] h-[24px] w-[26px] shrink-0" stroke="#000" strokeWidth="8" strokeLinecap="butt">
            <path d="M3 2.8 L23 21.2 M23 2.8 L3 21.2" />
            <path d="M4.5 4.5 L21.5 19.5 M21.5 4.5 L4.5 19.5" strokeLinecap="round" />
          </svg>
        </div>
      </div>
    </section>
  );
}

export default function App() {
  return (
    <main className="flex h-[1080px] w-[1920px] flex-col overflow-hidden bg-white pl-[57px] pt-[23px] font-['Noto_Sans_CJK_KR',sans-serif]">
      <div className="flex gap-[16px]">
        <ListPanel />
        <MapPanel />
      </div>
      <div className="ml-[4px] mt-[13px]">
        <ComparePanel />
      </div>
    </main>
  );
}
